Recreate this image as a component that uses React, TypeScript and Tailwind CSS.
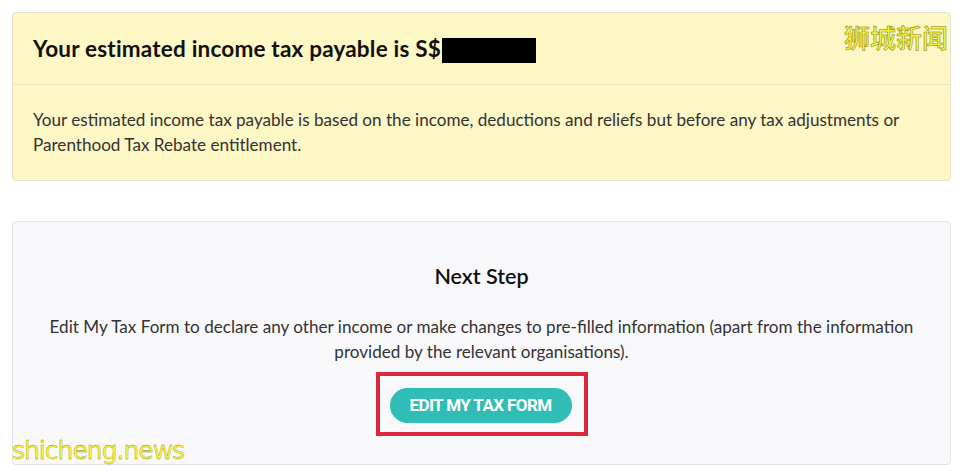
import React from "react";

export default function App() {
  return (
    <div className="relative w-[963px] h-[474px] bg-white overflow-hidden" style={{ fontFamily: '"Source Sans Pro", Lato, "Noto Sans", sans-serif' }}>
      <div className="pt-[12px] px-[12px]">
        <div className="relative rounded-[4px] border border-[#e6e3c8] bg-[#fdf6c5]">
          <div className="h-[72px] border-b border-[#e9e4c4] px-[20px] flex items-center">
            <h2 className="text-[22.5px] font-bold text-[#111] flex items-center tracking-[0.2px]">
              Your estimated income tax payable is S$
              <span className="inline-block w-[94px] h-[25px] bg-black ml-[1px] mt-[3px]" />
            </h2>
          </div>
          <div className="px-[20px] pt-[22px] pb-[23px] text-[17.1px] leading-[25px] text-[#333]">
            Your estimated income tax payable is based on the income, deductions and reliefs but before any tax adjustments or Parenthood Tax Rebate entitlement.
          </div>
          <div
            className="absolute right-[2px] top-[4px] text-[26px] font-medium text-[#f7f43a]"
            style={{ fontFamily: '"Noto Sans CJK SC", sans-serif', WebkitTextStroke: "0.5px #7d7a12" }}
          >
            狮城新闻
          </div>
        </div>
      </div>
      <div className="pt-[40px] px-[12px]">
        <div className="rounded-[4px] border border-[#e3e3e8] bg-[#f8f8fb] h-[244px] flex flex-col items-center pt-[40px]">
          <h3 className="text-[21.5px] font-semibold text-[#111] leading-[28px]">Next Step</h3>
          <p className="mt-[24px] text-[17.1px] leading-[25px] text-[#333] text-center px-[30px]">
            Edit My Tax Form to declare any other income or make changes to pre-filled information (apart from the information
            <br />
            provided by the relevant organisations).
          </p>
          <div className="mt-[8px] border-4 border-[#d8283c] pl-[10px] pr-[12px] pt-[12px] pb-[9px]">
            <button className="block w-[182px] h-[35px] rounded-full bg-[#30bdb6] text-white text-[17px] font-bold tracking-[-0.6px] uppercase" style={{ fontFamily: 'Roboto, sans-serif' }}>
              EDIT MY TAX FORM
            </button>
          </div>
        </div>
      </div>
      <div
        className="absolute left-[12px] top-[438px] text-[25px] text-[#f6f23a] leading-none"
        style={{ fontFamily: '"DejaVu Sans", sans-serif', WebkitTextStroke: "0.3px #8a8614", letterSpacing: "-1px" }}
      >
        shicheng.news
      </div>
    </div>
  );
}
